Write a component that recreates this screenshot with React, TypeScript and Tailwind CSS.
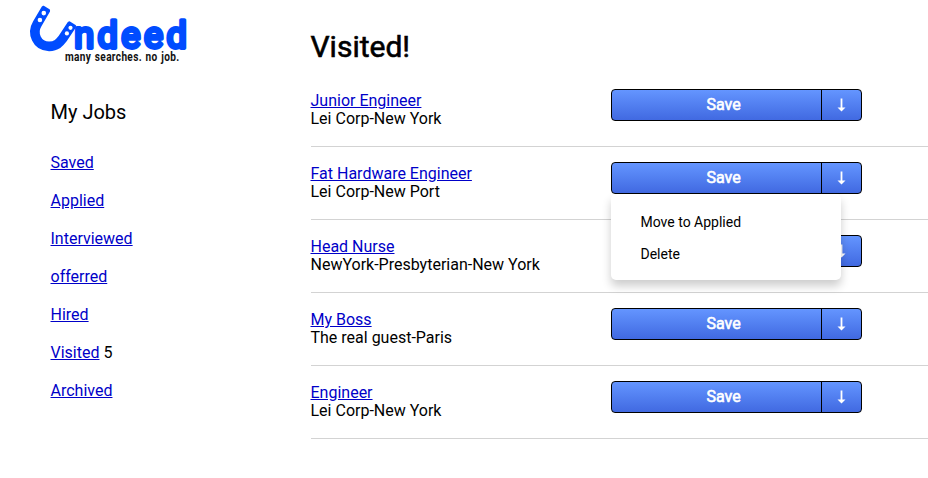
const links = [
  { label: 'Saved' },
  { label: 'Applied' },
  { label: 'Interviewed' },
  { label: 'offerred' },
  { label: 'Hired' },
  { label: 'Visited', count: 5 },
  { label: 'Archived' },
];

const jobs = [
  { title: 'Junior Engineer', place: 'Lei Corp-New York' },
  { title: 'Fat Hardware Engineer', place: 'Lei Corp-New Port', open: true },
  { title: 'Head Nurse', place: 'NewYork-Presbyterian-New York' },
  { title: 'My Boss', place: 'The real guest-Paris' },
  { title: 'Engineer', place: 'Lei Corp-New York' },
];

function Logo() {
  return (
    <svg className="block" width="180" height="70" viewBox="20 0 180 70" role="img" aria-label="Undeed, many searches. no job.">
      <g transform="translate(0.6 0.2)">
        <path
          d="M45.4 8.7 L36.7 23.5 C31 33 36 46 48.5 46.2 C56 46 59 42.5 62 38.5 L71.4 24.3"
          fill="none"
          stroke="#004cff"
          strokeWidth="9.6"
        />
        <path d="M42.6 6.7 L48.3 10.1 M68.7 22.2 L74.3 25.9" stroke="#004cff" strokeWidth="2.4" strokeLinecap="round" />
        <g fill="#fff">
          <circle cx="43.2" cy="12.9" r="2.3" />
          <circle cx="39.3" cy="19.8" r="2.3" />
          <circle cx="69.9" cy="27.6" r="2.1" />
          <circle cx="66.3" cy="33.2" r="2.1" />
        </g>
      </g>
      <text x="74.2" y="48.4" textLength="112.6" lengthAdjust="spacing" fill="#004cff" stroke="#004cff" strokeWidth="3.8" strokeLinejoin="round" fontFamily="Roboto, sans-serif" fontWeight="400" fontSize="36">ndeed</text>
      <text x="65" y="61" textLength="114.5" lengthAdjust="spacingAndGlyphs" wordSpacing="1" letterSpacing="0.4" fill="#111" fontFamily="Roboto, sans-serif" fontWeight="700" fontSize="12">many searches. no job.</text>
    </svg>
  );
}

function SaveButton() {
  return (
    <div className="flex h-8 w-[251px] overflow-hidden rounded-[4px] border border-black bg-gradient-to-b from-[#6495ff] to-[#4169e1] text-white">
      <button className="w-[210px] border-r border-black pl-[14px] text-base leading-[30px] [-webkit-text-stroke:0.6px_white]">Save</button>
      <button className="flex flex-1 items-center justify-center pr-px" aria-label="More">
        <svg width="9" height="14" viewBox="0 0 9 14" fill="#fff">
          <path d="M3.6 0.5h1.8v9H8.5L4.5 13.5 0.5 9.5h3.1z" />
        </svg>
      </button>
    </div>
  );
}

export default function App() {
  return (
    <div className="flex h-[478px] w-[928px] overflow-hidden bg-white font-[Roboto,sans-serif] text-base leading-[18px] text-black">
      <aside className="w-[310.5px] shrink-0">
        <div className="pl-5"><Logo /></div>
        <div className="pl-[50.5px] pt-[30px]">
          <h2 className="text-xl leading-6">My Jobs</h2>
          <ul className="mt-[30px] flex flex-col gap-5">
            {links.map((l) => (
              <li key={l.label} className="h-[18px]">
                <a className="text-[#0000c8] underline">{l.label}</a>
                {l.count ? ' ' + l.count : ''}
              </li>
            ))}
          </ul>
        </div>
      </aside>
      <main className="flex-1">
        <h1 className="mt-[29px] h-[45px] text-[30px] leading-[36px] font-normal [-webkit-text-stroke:0.6px_black]">Visited!</h1>
        {jobs.map((j) => (
          <section key={j.title} className="flex h-[73px] border-b border-[#d3d3d3] pt-[15px]">
            <div className="w-[300.5px] pt-[3px]">
              <a className="block w-fit text-[#0000c8] underline">{j.title}</a>
              <p>{j.place}</p>
            </div>
            <div className="relative">
              <SaveButton />
              {j.open && (
                <div className="absolute top-8 left-0 z-10 h-[86px] w-[230px] rounded-[5px] bg-white pt-3 pl-[29.5px] text-sm leading-8 shadow-[0_6px_10px_rgba(0,0,0,0.2)]">
                  <p>Move to Applied</p>
                  <p>Delete</p>
                </div>
              )}
            </div>
          </section>
        ))}
      </main>
    </div>
  );
}
